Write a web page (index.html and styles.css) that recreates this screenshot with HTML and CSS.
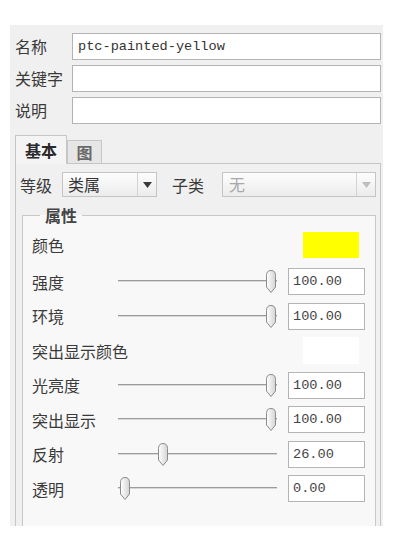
FILE: index.html
```html
<!DOCTYPE html>
<html lang="zh">
<head>
<meta charset="utf-8">
<title>ptc-painted-yellow</title>
<link rel="stylesheet" href="styles.css">
</head>
<body>
<div class="panel">
  <div class="meta">
    <span class="mlabel">名称</span><div class="tinput mono">ptc-painted-yellow</div>
    <span class="mlabel">关键字</span><div class="tinput mono"></div>
    <span class="mlabel">说明</span><div class="tinput mono"></div>
  </div>
  <div class="tabs">
    <div class="tabbar">
      <div class="tab active">基本</div>
      <div class="tab">图</div>
    </div>
    <div class="tabpage">
      <div class="combo-row">
        <span class="lbl">等级</span>
        <div class="combo c1">
          <span class="ctext">类属</span>
          <span class="carrow"><svg width="9" height="6" viewBox="0 0 9 6"><path d="M0 0H9L4.5 6Z" fill="#3a3a3a"/></svg></span>
        </div>
        <span class="lbl sub">子类</span>
        <div class="combo c2 disabled">
          <span class="ctext">无</span>
          <span class="carrow"><svg width="9" height="6" viewBox="0 0 9 6"><path d="M0 0H9L4.5 6Z" fill="#bdbdbd"/></svg></span>
        </div>
      </div>
      <fieldset class="props">
        <legend>属性</legend>
        <div class="rows">
          <div class="row first">
            <span class="plabel">颜色</span>
            <div class="swatch yellow"></div>
          </div>
          <div class="row">
            <span class="plabel">强度</span>
            <div class="slider"><svg class="thumb" style="left:147px" width="12" height="23" viewBox="0 0 12 23"><defs><linearGradient id="g1" x1="0" y1="0" x2="1" y2="0"><stop offset="0" stop-color="#ffffff"/><stop offset="1" stop-color="#d4d4d4"/></linearGradient></defs><path d="M1.5 5.5Q1.5 0.5 6 0.5Q10.5 0.5 10.5 5.5V17L6 22.5L1.5 17Z" fill="url(#g1)" stroke="#8c8c8c"/></svg></div>
            <div class="ninput mono">100.00</div>
          </div>
          <div class="row">
            <span class="plabel">环境</span>
            <div class="slider"><svg class="thumb" style="left:147px" width="12" height="23" viewBox="0 0 12 23"><path d="M1.5 5.5Q1.5 0.5 6 0.5Q10.5 0.5 10.5 5.5V17L6 22.5L1.5 17Z" fill="url(#g1)" stroke="#8c8c8c"/></svg></div>
            <div class="ninput mono">100.00</div>
          </div>
          <div class="row">
            <span class="plabel wide">突出显示颜色</span>
            <div class="swatch white"></div>
          </div>
          <div class="row">
            <span class="plabel">光亮度</span>
            <div class="slider"><svg class="thumb" style="left:147px" width="12" height="23" viewBox="0 0 12 23"><path d="M1.5 5.5Q1.5 0.5 6 0.5Q10.5 0.5 10.5 5.5V17L6 22.5L1.5 17Z" fill="url(#g1)" stroke="#8c8c8c"/></svg></div>
            <div class="ninput mono">100.00</div>
          </div>
          <div class="row">
            <span class="plabel">突出显示</span>
            <div class="slider"><svg class="thumb" style="left:147px" width="12" height="23" viewBox="0 0 12 23"><path d="M1.5 5.5Q1.5 0.5 6 0.5Q10.5 0.5 10.5 5.5V17L6 22.5L1.5 17Z" fill="url(#g1)" stroke="#8c8c8c"/></svg></div>
            <div class="ninput mono">100.00</div>
          </div>
          <div class="row">
            <span class="plabel">反射</span>
            <div class="slider"><svg class="thumb" style="left:39px" width="12" height="23" viewBox="0 0 12 23"><path d="M1.5 5.5Q1.5 0.5 6 0.5Q10.5 0.5 10.5 5.5V17L6 22.5L1.5 17Z" fill="url(#g1)" stroke="#8c8c8c"/></svg></div>
            <div class="ninput mono">26.00</div>
          </div>
          <div class="row">
            <span class="plabel">透明</span>
            <div class="slider"><svg class="thumb" style="left:1px" width="12" height="23" viewBox="0 0 12 23"><path d="M1.5 5.5Q1.5 0.5 6 0.5Q10.5 0.5 10.5 5.5V17L6 22.5L1.5 17Z" fill="url(#g1)" stroke="#8c8c8c"/></svg></div>
            <div class="ninput mono">0.00</div>
          </div>
        </div>
      </fieldset>
    </div>
  </div>
</div>
</body>
</html>
```

FILE: styles.css
```css
* { box-sizing: border-box; }

body {
  margin: 0;
  background: #ffffff;
  font-family: "Noto Sans CJK SC", "Noto Sans", sans-serif;
  font-size: 16px;
  color: #3a3a3a;
}

.mono {
  font-family: "Liberation Mono", "DejaVu Sans Mono", monospace;
  font-size: 13.6px;
  color: #333;
}

.panel {
  margin: 25px 0 0 10px;
  width: 373px;
  height: 501px;
  overflow: hidden;
  background: #f0f0f0;
  padding: 8px 2px 0 5px;
}

.meta {
  display: grid;
  grid-template-columns: 57px 1fr;
  grid-auto-rows: 27px;
  row-gap: 5px;
  align-items: center;
}

.mlabel {
  line-height: 27px;
  white-space: nowrap;
}

.tinput {
  height: 27px;
  background: #fff;
  border: 1px solid #b4b4b4;
  padding: 0 5px;
  line-height: 25px;
  white-space: nowrap;
}

.tabs {
  margin-top: 11px;
}

.tabbar {
  display: flex;
  align-items: flex-end;
  height: 28px;
}

.tab {
  border: 1px solid #c6c6c6;
  border-bottom: none;
  font-weight: 700;
  text-align: center;
  height: 23px;
  line-height: 22px;
  width: 35px;
  background: #e6e6e6;
  color: #6a6a6a;
}

.tab.active {
  width: 52px;
  height: 29px;
  line-height: 28px;
  margin-bottom: -1px;
  background: #f4f4f4;
  color: #2a2a2a;
  position: relative;
  z-index: 1;
}

.tabpage {
  border: 1px solid #c6c6c6;
  border-bottom: none;
  background: #f0f0f0;
  padding: 8px 4px 0 4px;
  height: 400px;
}

.combo-row {
  display: flex;
  align-items: center;
  height: 25px;
}

.lbl {
  white-space: nowrap;
}

.lbl.sub {
  margin-left: 15px;
}

.combo {
  display: flex;
  height: 25px;
  border: 1px solid #c4c4c4;
  background: linear-gradient(#fdfdfd, #ececec);
  margin-left: 10px;
}

.combo.c1 { width: 95px; }
.combo.c2 { width: 154px; margin-left: 18px; }

.ctext {
  flex: 1;
  padding-left: 5px;
  line-height: 23px;
  color: #333;
}

.combo.disabled .ctext {
  padding-left: 6px;
  color: #a8a8a8;
}

.carrow {
  width: 19px;
  border-left: 1px solid #d2d2d2;
  display: flex;
  align-items: center;
  justify-content: center;
}

.props {
  margin: 7px 0 0 2px;
  border: 1px solid #c8c8c8;
  border-bottom: none;
  background: #f8f8f8;
  padding: 6px 11px 0 9px;
  min-width: 0;
  height: 330px;
}

.props legend {
  margin-left: 8px;
  padding: 0 5px;
  font-weight: 700;
  line-height: 22px;
  color: #444;
}

.rows {
  display: flex;
  flex-direction: column;
  gap: 7.5px;
}

.row {
  display: flex;
  align-items: center;
  height: 27px;
}

.row.first {
  height: 26px;
  margin-bottom: 2.5px;
}

.plabel {
  width: 86px;
  flex: none;
  white-space: nowrap;
}

.plabel.wide {
  width: auto;
}

.swatch {
  margin-left: auto;
  margin-right: 5px;
  width: 56px;
  height: 26px;
}

.swatch.yellow { background: #ffff00; }
.swatch.white { background: #ffffff; height: 27px; }

.slider {
  position: relative;
  width: 159px;
  height: 27px;
  flex: none;
}

.slider::before {
  content: "";
  position: absolute;
  left: 0;
  right: 0;
  top: 12px;
  height: 2px;
  background: linear-gradient(#9c9c9c 50%, #d8d8d8 50%);
}

.thumb {
  position: absolute;
  top: 2px;
  display: block;
}

.ninput {
  margin-left: 11px;
  width: 77px;
  height: 27px;
  flex: none;
  background: #fff;
  border: 1px solid #b4b4b4;
  padding-left: 4px;
  line-height: 25px;
  color: #444;
}
```
